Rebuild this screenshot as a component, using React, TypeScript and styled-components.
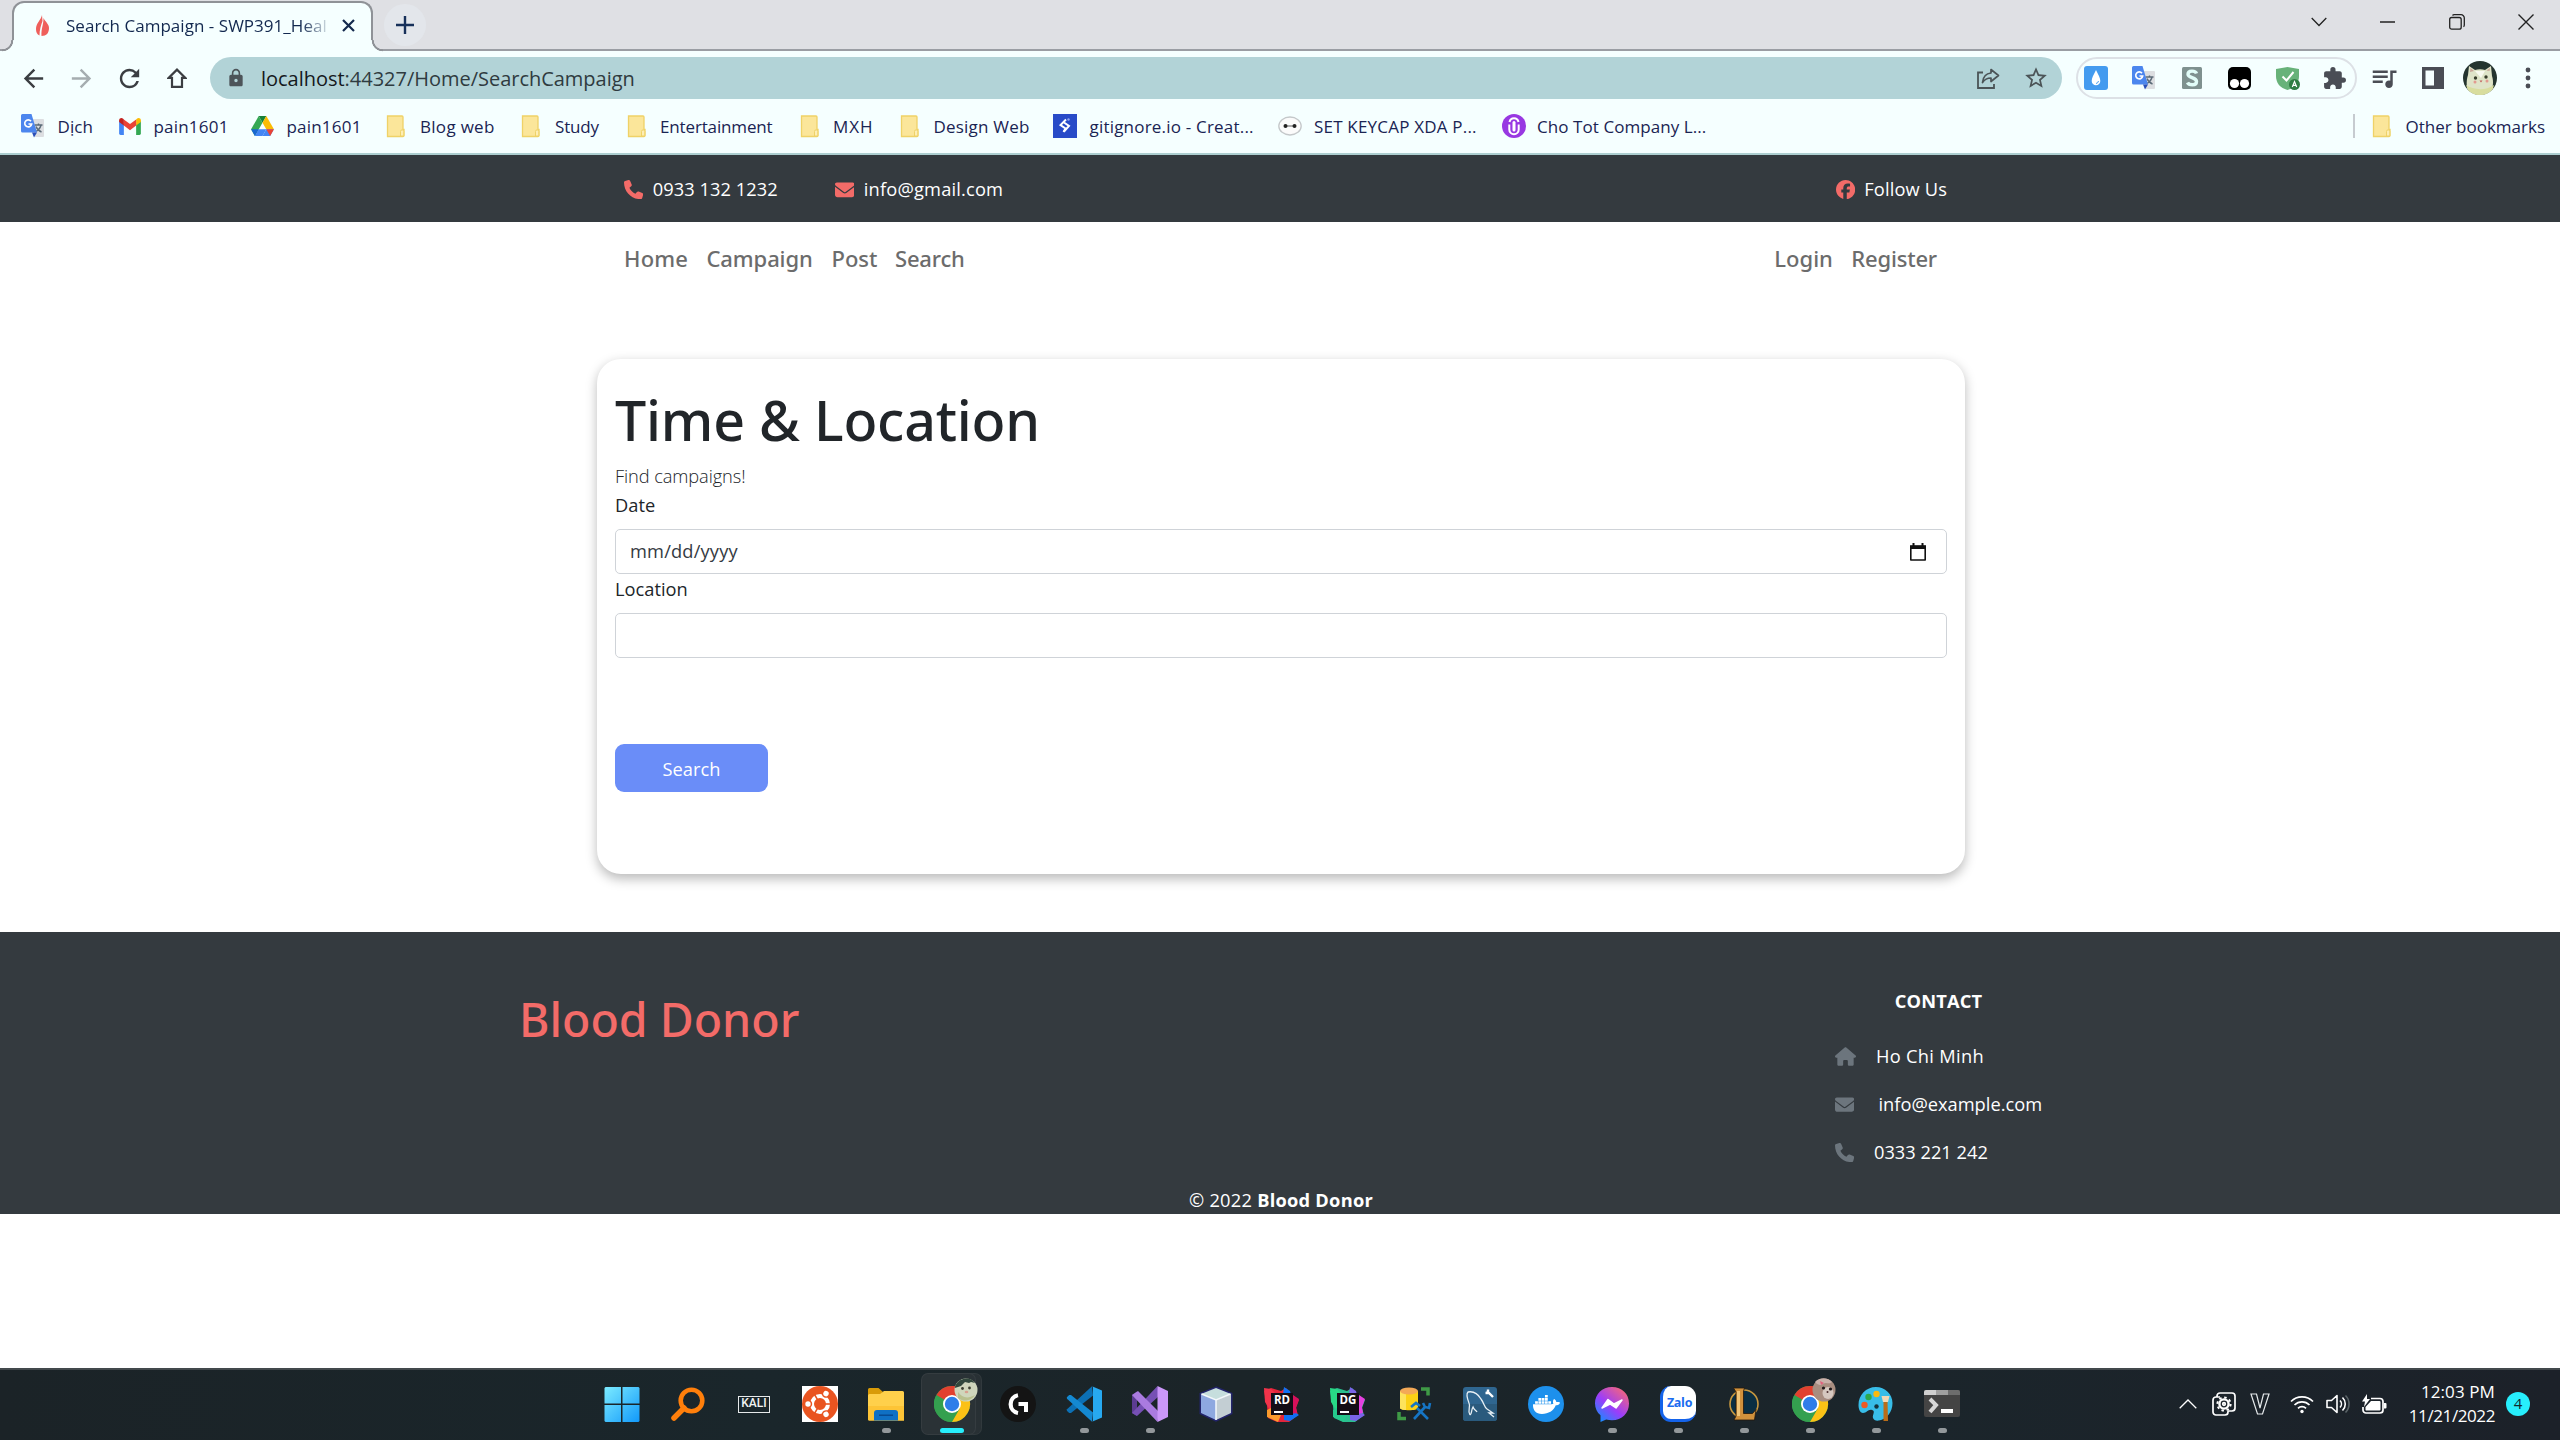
import React from "react";
import styled, { createGlobalStyle, css } from "styled-components";
import { FaPhone, FaEnvelope, FaFacebook, FaHouse, FaDocker } from "react-icons/fa6";
import { MdArrowBack, MdArrowForward, MdRefresh, MdLock, MdStarBorder, MdExtension, MdQueueMusic } from "react-icons/md";

const sans = `"Open Sans", "Noto Sans", sans-serif`;
const wide = `"Noto Sans", "Open Sans", sans-serif`;

const Global = createGlobalStyle`
  * { box-sizing: border-box; }
  body { margin: 0; background: #fff; font-family: ${sans}; overflow: hidden; }
  svg { display: block; flex: none; }
`;

const Screen = styled.div`
  width: 2560px;
  height: 1440px;
  display: flex;
  flex-direction: column;
  overflow: hidden;
`;

const Text = styled.span<{ $ls?: number }>`
  white-space: nowrap;
  letter-spacing: ${(p) => p.$ls ?? 0}px;
`;

/* ---------- browser chrome ---------- */

const TabStrip = styled.div`
  height: 51px;
  background: #dfe0e4;
  border-bottom: 2px solid #9a9da3;
  display: flex;
  align-items: flex-start;
  padding-left: 12px;
`;

const flare = css`
  content: "";
  position: absolute;
  bottom: 0;
  width: 12px;
  height: 12px;
`;

const Tab = styled.div`
  position: relative;
  height: 51px;
  width: 361px;
  margin-top: 1px;
  margin-bottom: -2px;
  background: #f5ffff;
  border: 2px solid #8f9297;
  border-bottom: 0;
  border-radius: 12px 12px 0 0;
  display: flex;
  align-items: center;
  padding: 0 16px 4px 20px;
  font-size: 17px;
  color: #12284f;
  &::before {
    ${flare}
    left: -12px;
    background: radial-gradient(circle at 0 0, transparent 9px, #8f9297 9.6px, #8f9297 11px, #f5ffff 11.6px);
  }
  &::after {
    ${flare}
    right: -12px;
    background: radial-gradient(circle at 100% 0, transparent 9px, #8f9297 9.6px, #8f9297 11px, #f5ffff 11.6px);
  }
`;

const TabTitle = styled.div`
  width: 264px;
  margin: 0 12px 0 15px;
  overflow: hidden;
  white-space: nowrap;
  letter-spacing: 0.03px;
  mask-image: linear-gradient(90deg, #000 235px, transparent 266px);
`;

const NewTab = styled.div`
  width: 42px;
  height: 42px;
  margin: 4px 0 0 11px;
  border-radius: 50%;
  background: #e3e6eb;
  display: flex;
  align-items: center;
  justify-content: center;
`;

const WindowButtons = styled.div`
  margin-left: auto;
  display: flex;
  height: 43px;
`;

const WindowButton = styled.div`
  width: 69px;
  display: flex;
  align-items: center;
  justify-content: center;
`;

const Toolbar = styled.div`
  height: 54px;
  background: #f5ffff;
  display: flex;
  align-items: center;
  padding-left: 9px;
  color: #3b3e42;
`;

const ToolButton = styled.div<{ $w?: number; $color?: string }>`
  width: ${(p) => p.$w ?? 48}px;
  height: 42px;
  flex: none;
  display: flex;
  align-items: center;
  justify-content: center;
  color: ${(p) => p.$color ?? "inherit"};
`;

const AddressBar = styled.div`
  width: 1852px;
  height: 42px;
  margin-left: 9px;
  border-radius: 21px;
  background: #b2d3d7;
  display: flex;
  align-items: center;
  padding: 0 2px 0 16px;
  font-size: 20px;
  color: #2f3b40;
`;

const Url = styled.div`
  flex: 1;
  margin-left: 15px;
  white-space: nowrap;
  letter-spacing: -0.02px;
  b { font-weight: 400; color: #15191c; }
`;

const Extensions = styled.div`
  width: 281px;
  height: 42px;
  margin-left: 14px;
  border: 2px solid #dde1e6;
  border-radius: 21px;
  display: flex;
  align-items: center;
  justify-content: center;
  padding-right: 4px;
`;

const Avatar = styled.div`
  width: 34px;
  height: 34px;
  border-radius: 50%;
  overflow: hidden;
`;

const BookmarkBar = styled.div`
  height: 50px;
  background: #f5ffff;
  border-bottom: 2px solid #acced0;
  display: flex;
  align-items: center;
  padding: 0 15px 6px 21px;
  font-size: 17px;
  color: #1a2453;
`;

const Bookmark = styled.div<{ $w: number }>`
  width: ${(p) => p.$w}px;
  flex: none;
  display: flex;
  align-items: center;
`;

const BookmarkIcon = styled.div<{ $w: number }>`
  width: ${(p) => p.$w}px;
  flex: none;
`;

const OtherBookmarks = styled.div`
  margin-left: auto;
  height: 24px;
  border-left: 2px solid #c6cbd0;
  padding-left: 17px;
  display: flex;
  align-items: center;
`;

/* ---------- web page ---------- */

const Page = styled.main`
  flex: 1;
  background: #fff;
  color: #212529;
  font-size: 18.25px;
  line-height: 28.8px;
`;

const TopBar = styled.div`
  height: 67px;
  background: #343a3f;
  color: #fff;
  display: flex;
  align-items: center;
  padding: 2px 613px 0 624px;
`;

const ContactLink = styled.div<{ $gap: number; $after?: number }>`
  display: flex;
  align-items: center;
  gap: ${(p) => p.$gap}px;
  margin-right: ${(p) => p.$after ?? 0}px;
  svg { color: #f36b68; }
`;

const Spacer = styled.div`
  flex: 1;
`;

const Nav = styled.nav`
  height: 73px;
  padding: 0 623px 2px 624px;
  display: flex;
  align-items: center;
  font: 500 22px ${wide};
  color: #6c6c6c;
`;

const NavLink = styled.span<{ $w?: number; $ls?: number }>`
  width: ${(p) => (p.$w ? p.$w + "px" : "auto")};
  letter-spacing: ${(p) => p.$ls ?? 0}px;
`;

const Card = styled.section`
  width: 1368px;
  height: 515px;
  margin: 64px 0 58px 597px;
  padding: 26px 18px 0;
  border-radius: 24px;
  background: #fff;
  box-shadow: 0 4.8px 12px rgba(0, 0, 0, 0.27);
`;

const Title = styled.h1`
  margin: 0 0 8px;
  font: 500 55.5px/69px ${wide};
  letter-spacing: -0.2px;
`;

const Lead = styled.p`
  margin: 0;
  font-weight: 300;
  letter-spacing: -0.1px;
`;

const Label = styled.label`
  display: block;
  margin-bottom: 9.6px;
`;

const Field = styled.div`
  height: 45px;
  width: 1332px;
  margin-bottom: 0.4px;
  border: 1px solid #cfd3d8;
  border-radius: 5px;
  padding: 0 19px 0 14px;
  display: flex;
  align-items: center;
  justify-content: space-between;
  color: #343a42;
`;

const SearchButton = styled.button`
  width: 153px;
  height: 48px;
  margin-top: 86.5px;
  border: 0;
  border-radius: 9px;
  background: #6a8df8;
  color: #fff;
  font: 400 18.25px ${sans};
  display: block;
`;

const Footer = styled.footer`
  height: 282px;
  background: #343a3f;
  color: #fff;
  padding-top: 55px;
`;

const FooterColumns = styled.div`
  display: flex;
  justify-content: space-between;
  padding: 0 480px 0 519px;
`;

const Brand = styled.h2`
  margin: 4px 0 0;
  font: 500 46.5px/57.6px ${wide};
  letter-spacing: 0;
  color: #f36b68;
`;

const Contact = styled.div`
  width: 245px;
`;

const ContactTitle = styled.h6`
  margin: 0 0 26px;
  width: 207px;
  text-align: center;
  font: 700 18.25px/28.8px ${sans};
  letter-spacing: 0.2px;
`;

const ContactLine = styled.p<{ $cell: number }>`
  margin: 0 0 19.2px;
  display: flex;
  align-items: center;
  svg { color: #6c757d; }
  > div { width: ${(p) => p.$cell}px; }
`;

const IconCell = styled.div`
  flex: none;
`;

const Copyright = styled.div`
  text-align: center;
  letter-spacing: 0.25px;
  padding-left: 2px;
`;

/* ---------- taskbar ---------- */

const Taskbar = styled.div`
  height: 72px;
  border-top: 2px solid #43494c;
  background: linear-gradient(90deg, #1b2327, #1a262b 30%, #1b2428 48%, #1b252b 75%, #1c2129);
  display: flex;
  padding-left: 589px;
  color: #fff;
`;

const TaskItem = styled.div<{ $active?: boolean }>`
  width: 66px;
  height: 70px;
  flex: none;
  padding: 4px 3px 6px;
  > div {
    height: 60px;
    border-radius: 6px;
    padding-top: 12px;
    display: flex;
    flex-direction: column;
    align-items: center;
    ${(p) =>
      p.$active &&
      css`
        width: 53px;
        padding-left: 7px;
        background: #2a3236;
        box-shadow: 0 0 0 1px #353c40, 6px 0 0 0 #283034, 6px 0 0 1px #31393d;
      `}
  }
`;

const Indicator = styled.div<{ $on?: boolean }>`
  width: ${(p) => (p.$on ? 24 : 9)}px;
  height: 5px;
  margin-top: 6px;
  border-radius: 3px;
  background: ${(p) => (p.$on ? "#27eefc" : "#93989b")};
`;

const Tray = styled.div`
  margin-left: auto;
  display: flex;
  align-items: center;
  padding-right: 30px;
`;

const TrayIcon = styled.div<{ $w: number }>`
  width: ${(p) => p.$w}px;
  height: 70px;
  padding-bottom: 2px;
  display: flex;
  align-items: center;
  justify-content: center;
`;

const Clock = styled.div`
  width: 97px;
  margin: 0 11px 3px 0;
  text-align: right;
  font-size: 17px;
  line-height: 24px;
`;

const Badge = styled.div`
  width: 24px;
  height: 24px;
  margin-bottom: 3px;
  border-radius: 50%;
  background: #27eefc;
  color: #10282c;
  font-size: 15px;
  line-height: 23px;
  text-align: center;
`;

/* ---------- drawings ---------- */

const Folder = () => (
  <svg width="20" height="24" viewBox="0 0 20 24">
    <path d="M1.5 2h14.5a1 1 0 0 1 1 1v12.500h1v6a1 1 0 0 1-1 1H1.500z" fill="#fbe69a" stroke="#efd267" strokeWidth="1.300" />
    <path d="M14.500 22v-4.500a1.600 1.600 0 0 1 3.300 0V22z" fill="#fdeeb4" stroke="#efd267" />
  </svg>
);

const Translate = ({ s = 24 }: { s?: number }) => (
  <svg width={s} height={s} viewBox="0 0 24 24">
    <path d="M10 5h12a1 1 0 0 1 1 1v16a1 1 0 0 1-1 1H14z" fill="#dcdee1" />
    <path d="M13.500 11h8M17.500 9.500v1.500M20 11c-.6 3-2.500 5-5 6.500M15 12.500c1 2.500 3 4.500 5.500 5.500" stroke="#5b6b78" strokeWidth="1.400" fill="none" />
    <path d="M1.500 0h9l5.500 18.500H1.500A1.500 1.500 0 0 1 0 17V1.500A1.500 1.500 0 0 1 1.500 0z" fill="#4c86ee" />
    <path d="M11 18.500h5L13 23.500z" fill="#2a4fb8" />
    <path d="M10 7.200A3.500 3.500 0 1 0 10.700 10H7.500" stroke="#fff" strokeWidth="1.600" fill="none" />
  </svg>
);

const Gmail = () => (
  <svg width="22" height="17" viewBox="0 0 23 18">
    <path d="M0 3v13.500A1.500 1.500 0 0 0 1.500 18H5V7z" fill="#4285f4" />
    <path d="M23 3v13.500a1.500 1.500 0 0 1-1.500 1.500H18V7z" fill="#34a853" />
    <path d="M18 1.500V8l5-3.700V2.500C23 .4 20.500-.6 18.800.7z" fill="#fbbc04" />
    <path d="M5 8V1.500l6.500 4.900L18 1.500V8l-6.500 5z" fill="#ea4335" />
    <path d="M0 2.500v1.800L5 8V1.500L4.200.7C2.500-.6 0 .4 0 2.500z" fill="#c5221f" />
  </svg>
);

const Drive = () => (
  <svg width="23" height="20" viewBox="0 0 24 21">
    <path d="M8 0h8l-4 7z" fill="#188038" />
    <path d="M8 0l4 7-8 14-4-7z" fill="#34a853" />
    <path d="M16 0l8 14h-8l-4-7z" fill="#fbbc04" />
    <path d="M8 14h8l-4 7H4z" fill="#4285f4" />
    <path d="M16 14h8l-4 7h-8z" fill="#4285f4" />
    <path d="M16 14h8l-4 7z" fill="#ea4335" />
    <path d="M8 14H0l4 7z" fill="#1967d2" />
  </svg>
);

const GitIgnore = () => (
  <svg width="24" height="24" viewBox="0 0 24 24">
    <path d="M0 0h24v24H0z" fill="#284bc8" />
    <path d="M13 5.500L7.500 11l5 3.500-2 3.500" fill="none" stroke="#fff" strokeWidth="2" />
    <path d="M11 8.500l5 3.500-5 5.500" fill="none" stroke="#fff" strokeWidth="2" />
    <circle cx="15.500" cy="5.500" r="1.200" fill="#8fa5f0" />
  </svg>
);

const Keycap = () => (
  <svg width="24" height="20" viewBox="0 0 24 20">
    <ellipse cx="12" cy="10" rx="11.200" ry="9" fill="#fbfbfb" stroke="#c4c8ca" strokeWidth="1.300" />
    <path d="M8 10h8" stroke="#777" strokeWidth="1.200" />
    <circle cx="7.500" cy="10" r="2" fill="#222" />
    <circle cx="16.500" cy="10" r="2" fill="#222" />
  </svg>
);

const ChoTot = () => (
  <svg width="24" height="24" viewBox="0 0 24 24">
    <circle cx="12" cy="12" r="12" fill="#9838e2" />
    <path d="M7.300 10.500v5a4.700 4.700 0 0 0 9.400 0v-5M7.500 8c1-5 8-5 9 0" fill="none" stroke="#fff" strokeWidth="2" />
    <path d="M12 8.500v7.500" stroke="#fff" strokeWidth="3" strokeLinecap="round" />
  </svg>
);

const ChromeSvg = styled.svg`
  margin: -8px -8px 0 0;
`;

const Chrome = ({ face }: { face: "cat" | "rat" }) => (
  <ChromeSvg width="44" height="44" viewBox="0 0 44 44">
    <g transform="translate(0 8)">
      <circle cx="18" cy="18" r="18" fill="#34a04f" />
      <path d="M18 18L2.400 9A18 18 0 0 1 33.600 9z" fill="#e2402f" />
      <path d="M18 18l15.600-9A18 18 0 0 1 18 36z" fill="#fbc116" />
      <path d="M18 0a18 18 0 0 1 15.600 9H18z" fill="#e2402f" />
      <path d="M25.800 22.500L18 36A18 18 0 0 1 2.400 9l7.800 13.500z" fill="#34a04f" />
      <circle cx="18" cy="18" r="9" fill="#fff" />
      <circle cx="18" cy="18" r="7.200" fill="#2f7de9" />
    </g>
    <circle cx="32" cy="12" r="11.500" fill={face === "cat" ? "#cfd6bc" : "#a88d80"} />
    {face === "cat" ? (
      <g>
        <path d="M20.700 10A11.500 11.500 0 0 1 41 5l-4-1-2 1-4-1-4 4-3 1z" fill="#31473c" />
        <path d="M24 14c4 6 10 7 17 3a11.500 11.500 0 0 1-17 3z" fill="#b9c08e" />
        <circle cx="28.500" cy="10.500" r="1.400" fill="#3c4030" />
        <circle cx="35.500" cy="10" r="1.400" fill="#3c4030" />
        <ellipse cx="32.500" cy="14" rx="1.800" ry="1.200" fill="#d8a090" />
      </g>
    ) : (
      <g>
        <path d="M23 4a11.500 11.500 0 0 1 17 0c-2 2-4 1-6 1-4 0-5 5-11-1z" fill="#c9b1aa" />
        <path d="M28 3l4 2-3 2z" fill="#e0607c" />
        <ellipse cx="36" cy="15" rx="5.500" ry="6" fill="#d6c8c0" />
        <circle cx="31.500" cy="10" r="1.600" fill="#20181a" />
        <circle cx="38.500" cy="11" r="1.600" fill="#20181a" />
        <circle cx="35.500" cy="14" r="1" fill="#4b2d2d" />
      </g>
    )}
  </ChromeSvg>
);

const Cat = () => (
  <svg width="34" height="34" viewBox="0 0 34 34">
    <path d="M0 0h34v34H0z" fill="#24342f" />
    <path d="M5 14l1-9 6 4c3-1 7-1 10 0l6-4 1 10c2 6 1 12-2 19H7C3 28 3 20 5 14z" fill="#dfe4c8" />
    <path d="M7 11l0.500-4 3.500 3zM26.500 10l0.500-3-3.500 2.500z" fill="#c9a596" />
    <path d="M12 10h10l-4 7z" fill="#f8f9ee" />
    <circle cx="12.500" cy="17" r="1.700" fill="#3a3f2c" />
    <circle cx="23" cy="16" r="1.700" fill="#3a3f2c" />
    <circle cx="12" cy="21" r="1.500" fill="#e29a90" />
    <circle cx="24" cy="20" r="1.500" fill="#e29a90" />
    <path d="M16.500 19.500h3L18 21.500z" fill="#c0605c" />
    <path d="M3 24c7 5 20 6 28 0l-3 10H7z" fill="#d8dd9e" />
  </svg>
);

const Start = () => (
  <svg width="36" height="36" viewBox="0 0 36 36">
    <defs>
      <linearGradient id="st" x1="0" y1="0" x2="1" y2="1" gradientUnits="objectBoundingBox">
        <stop offset="0" stopColor="#7cebff" />
        <stop offset="1" stopColor="#1199fb" />
      </linearGradient>
    </defs>
    <path d="M1.500 1H17v16.500H.5V2zM18.500 1H34.500l1 1v15.500h-17zM.5 19H17v17H1.500l-1-1zM18.500 19h17v16l-1 1h-16z" fill="url(#st)" />
  </svg>
);

const Everything = () => (
  <svg width="36" height="36" viewBox="0 0 36 36">
    <circle cx="21.500" cy="14.500" r="10.800" fill="none" stroke="#ff7f0b" strokeWidth="4.600" />
    <path d="M14 22L4 32" stroke="#ff7f0b" strokeWidth="5.500" strokeLinecap="round" />
  </svg>
);

const KaliBox = styled.div`
  width: 32px;
  height: 17px;
  margin: 9.5px 0;
  border: 1.5px solid #e6e9ea;
  font: 500 12px/13px "Roboto", ${sans};
  letter-spacing: 0;
  text-align: center;
  color: #f2f4f4;
`;

const Ubuntu = () => (
  <svg width="36" height="36" viewBox="0 0 36 36">
    <path d="M0 0h36v36H0z" fill="#fff" />
    <circle cx="18" cy="18" r="18" fill="#e95420" />
    <circle cx="18" cy="18" r="8" fill="none" stroke="#fff" strokeWidth="4" />
    {[60, 180, 300].map((a) => (
      <g key={a} transform={`rotate(${a} 18 18)`}>
        <path d="M18 18h14" stroke="#e95420" strokeWidth="0" />
        <circle cx="30" cy="18" r="4.200" fill="#e95420" />
        <circle cx="30" cy="18" r="2.700" fill="#fff" />
        <path d="M7.500 18h5.500" stroke="#e95420" strokeWidth="1.600" />
      </g>
    ))}
  </svg>
);

const Explorer = () => (
  <svg width="36" height="36" viewBox="0 0 36 36">
    <path d="M0 8V3.500A1.500 1.500 0 0 1 1.500 2h9l4.500 4-4 5H0z" fill="#d99b08" />
    <path d="M0 9.500A1.500 1.500 0 0 1 1.500 8H12l4-3h18.500A1.500 1.500 0 0 1 36 6.500v28H1.500A1.500 1.500 0 0 1 0 33z" fill="#ffd04b" />
    <path d="M0 20h36v14.500H1.500A1.500 1.500 0 0 1 0 33z" fill="#fdc436" />
    <path d="M6 34.500V27a3 3 0 0 1 3-3h18a3 3 0 0 1 3 3v7.500z" fill="#0f70c4" />
    <path d="M11 29.200h14" stroke="#07448a" strokeWidth="1.300" />
  </svg>
);

const Ghub = () => (
  <svg width="36" height="36" viewBox="0 0 36 36">
    <circle cx="18" cy="18" r="18" fill="#141414" />
    <path d="M18 9.300A9 9 0 0 0 18 27" fill="none" stroke="#fff" strokeWidth="4.200" />
    <path d="M18.500 18H26v8" fill="none" stroke="#fff" strokeWidth="4" />
  </svg>
);

const VSCode = () => (
  <svg width="36" height="36" viewBox="0 0 36 36">
    <path d="M26 .3L1 23.200l-.2 1.500 2.400 2.200 1.800.1L27 9.500z" fill="#0c70b5" />
    <path d="M5 9l-1.800 0L.8 11.200 1 12.800 26 35.700 27 26.500z" fill="#1489d2" />
    <path d="M26 .3L36 4.500v27L26 35.700c.6-.4 1-1 1-2V2.300c0-1-.4-1.600-1-2z" fill="#27a9f1" />
  </svg>
);

const VisualStudio = () => (
  <svg width="36" height="36" viewBox="0 0 36 36">
    <path d="M0 9l5-3.500V30l-5-3z" fill="#5c3c92" />
    <path d="M5 30L0 27 25.500 0 27 10z" fill="#7650b4" />
    <path d="M0 9l6-4 21 21-1.500 10z" fill="#aa7be0" />
    <path d="M25.500 0L36 5v26l-10.500 5z" fill="#cb97f9" />
  </svg>
);

const Cube = () => (
  <svg width="36" height="36" viewBox="0 0 36 36">
    <path d="M18 2l15 6v19L18 34 3 27V8z" fill="none" stroke="#23246b" strokeWidth="3" />
    <path d="M18 2l15 6-15 6L3 8z" fill="#c6dedd" />
    <path d="M3 8l15 6v20L3 27z" fill="#8ea8e0" />
    <path d="M33 8l-15 6v20l15-7z" fill="#c3ced3" />
    <path d="M18 14v20M3.500 8L18 14l14.500-6" stroke="#f4f8fb" strokeWidth="1.500" fill="none" />
  </svg>
);

const JetBox = styled.div`
  position: relative;
  width: 36px;
  height: 36px;
  > span {
    position: absolute;
    left: 7px;
    top: 7px;
    width: 22px;
    height: 22px;
    background: #140d16;
    font: 700 11.5px/14px ${sans};
    text-align: center;
    color: #fff;
  }
  > i {
    position: absolute;
    left: 10px;
    top: 25px;
    width: 9px;
    height: 2px;
    background: #fff;
  }
`;

const JetBrains = ({ name, c }: { name: string; c: string[] }) => (
  <JetBox>
    <svg width="36" height="36" viewBox="0 0 36 36">
      <path d="M0 5l7 -3 10 3 5-3 5 6 8 6-3 8 2 7-9 7-12 0-9-4-1-12z" fill={c[0]} />
      <path d="M0 2l7 1 8 8-9 13-5-8z" fill={c[1]} />
      <path d="M20 1l6 4 2 8-9-5zM20 28l9-3 6 4-9 6-6-1z" fill={c[2]} />
      <path d="M26 7l9 6-3 8 1 6-6 1z" fill={c[3]} />
      <path d="M3 24l6-3 8 8-3 7-11-5z" fill={c[4]} />
    </svg>
    <span>{name}</span>
    <i />
  </JetBox>
);

const SqlTools = () => (
  <svg width="36" height="36" viewBox="0 0 36 36">
    <path d="M4 5v17c0 3 18 3 18 0V5z" fill="#fcd116" />
    <path d="M4 5v17c0 1 3 2 6 2V7z" fill="#fde35c" />
    <ellipse cx="13" cy="5" rx="9" ry="3.500" fill="#f3a957" />
    <path d="M25 3h7v6.500M3 26v6.500h7" fill="none" stroke="#3f9a46" strokeWidth="3.500" />
    <path d="M18 33l11-12M21 22l11 11M15 21l5-4 4 3M27 17l2 4 4 1 1-5" fill="none" stroke="#1675c4" strokeWidth="2.600" />
  </svg>
);

const MySql = () => (
  <svg width="36" height="36" viewBox="0 0 36 36">
    <rect x="1" y="1" width="34" height="34" rx="3" fill="#2f6690" />
    <path d="M1 18h34v14a3 3 0 0 1-3 3H4a3 3 0 0 1-3-3z" fill="#2a5a7d" />
    <path d="M8 29c-3-5 1-8-1-12C5 12 4 8 6 6c5-1 10 2 13 7 3 4 3 8 6 10l6 4-4 0 5 4M8 29c2-1 1-5 3-8 1 3 3 3 4 5" fill="none" stroke="#e9f1f6" strokeWidth="1.300" />
    <path d="M25 5l6 6M26 3.500v3.500l-2.500 0" stroke="#fff" strokeWidth="2.400" fill="none" />
  </svg>
);

const DockerDisc = styled.div`
  width: 36px;
  height: 36px;
  border-radius: 50%;
  background: #1d90ec;
  color: #fff;
  display: flex;
  align-items: center;
  justify-content: center;
`;

const Messenger = () => (
  <svg width="36" height="36" viewBox="0 0 36 36">
    <defs>
      <linearGradient id="ms" x1="0.1" y1="1" x2="0.9" y2="0">
        <stop offset="0" stopColor="#0a93ff" />
        <stop offset=".45" stopColor="#9b3dfa" />
        <stop offset="1" stopColor="#ff6a6e" />
      </linearGradient>
    </defs>
    <path d="M18 1C8 1 1 8.200 1 17.300c0 5 2 9.200 5.500 12V36l5.700-2.500c1.800.5 3.800.8 5.800.8 10 0 17-7.200 17-16.800S28 1 18 1z" fill="url(#ms)" />
    <path d="M8 22l6-8.500 6 4.500 8-4-6 8-6-4z" fill="#fff" stroke="#fff" strokeWidth="1.500" strokeLinejoin="round" />
  </svg>
);

const ZaloTile = styled.div`
  width: 36px;
  height: 36px;
  border-radius: 11px;
  background: #fff;
  border-left: 3px solid #1463ea;
  border-bottom: 3px solid #1463ea;
  font: 700 12.5px/33px ${sans};
  letter-spacing: -0.3px;
  text-align: center;
  color: #1a6cf0;
`;

const League = () => (
  <svg width="36" height="36" viewBox="0 0 36 36">
    <circle cx="18" cy="18" r="14" fill="#0a2e42" stroke="#c6973f" strokeWidth="1.600" />
    <path d="M7.500 2h11l-1 3v22.500h9l3.500-4L28.500 34H8l2-4V6z" fill="#d0913c" stroke="#23170a" strokeWidth=".8" />
    <path d="M11 5h3v25h-3z" fill="#f0c477" />
  </svg>
);

const Paint = () => (
  <svg width="36" height="36" viewBox="0 0 36 36">
    <path d="M18 1C8 1 .5 9 .5 19c0 4 1.500 8 4.500 8 4 0 5-4 9-3 4 1 0 5 1 8 .6 2 3 3 6 2.500C29 33 34.500 26 34.500 17S27 1 18 1z" fill="#38bde8" />
    <circle cx="6.500" cy="19" r="3.200" fill="#ee5a24" />
    <circle cx="10.500" cy="11" r="3.200" fill="#2ca84a" />
    <circle cx="18.500" cy="8" r="3.200" fill="#fbb90f" />
    <circle cx="18.500" cy="20.500" r="2.200" fill="#14343d" />
    <path d="M25.500 15h4l.5 20h-4.500z" fill="#b96d18" />
    <path d="M23.500 10h8l-1.500 6h-5z" fill="#f3d9b5" />
  </svg>
);

const Terminal = () => (
  <svg width="36" height="36" viewBox="0 0 36 36">
    <path d="M0 6a2 2 0 0 1 2-2h32a2 2 0 0 1 2 2v23a2 2 0 0 1-2 2H2a2 2 0 0 1-2-2z" fill="#444" />
    <path d="M0 9V6a2 2 0 0 1 2-2h10v5z" fill="#cfcfcf" />
    <path d="M12 4h12v5H12z" fill="#a0a0a0" />
    <path d="M24 4h10a2 2 0 0 1 2 2v3H24z" fill="#6d6d6d" />
    <path d="M6 13l6 6-6 7" fill="none" stroke="#d6d6d6" strokeWidth="4" />
    <rect x="17" y="23" width="12" height="4" fill="#fff" />
  </svg>
);

const bookmarks: { w: number; off: number; label: string; ls: number; icon: React.ReactNode }[] = [
  { w: 97.5, off: 36.5, label: "Dịch", ls: 0.08, icon: <Translate /> },
  { w: 132.5, off: 35, label: "pain1601", ls: 0.2, icon: <Gmail /> },
  { w: 135, off: 35.5, label: "pain1601", ls: 0.2, icon: <Drive /> },
  { w: 135, off: 34, label: "Blog web", ls: 0.3, icon: <Folder /> },
  { w: 105.5, off: 34, label: "Study", ls: -0.18, icon: <Folder /> },
  { w: 173, off: 33.5, label: "Entertainment", ls: -0.15, icon: <Folder /> },
  { w: 100.5, off: 33.5, label: "MXH", ls: 1, icon: <Folder /> },
  { w: 153, off: 33.5, label: "Design Web", ls: 0.2, icon: <Folder /> },
  { w: 225, off: 36.5, label: "gitignore.io - Creat...", ls: 0.2, icon: <GitIgnore /> },
  { w: 224, off: 36, label: "SET KEYCAP XDA P...", ls: 0.2, icon: <Keycap /> },
  { w: 210, off: 35, label: "Cho Tot Company L...", ls: 0.07, icon: <ChoTot /> },
];

const apps: { icon: React.ReactNode; running?: boolean; active?: boolean }[] = [
  { icon: <Start /> },
  { icon: <Everything /> },
  { icon: <KaliBox>KALI</KaliBox> },
  { icon: <Ubuntu /> },
  { icon: <Explorer />, running: true },
  { icon: <Chrome face="cat" />, active: true },
  { icon: <Ghub /> },
  { icon: <VSCode />, running: true },
  { icon: <VisualStudio />, running: true },
  { icon: <Cube /> },
  { icon: <JetBrains name="RD" c={["#e5243b", "#f2334a", "#1070f4", "#d8105c", "#fb9a2c"]} /> },
  { icon: <JetBrains name="DG" c={["#2bbf8f", "#28d886", "#7a63e8", "#e640e0", "#25c98c"]} /> },
  { icon: <SqlTools /> },
  { icon: <MySql /> },
  { icon: <DockerDisc><FaDocker size={27} /></DockerDisc> },
  { icon: <Messenger />, running: true },
  { icon: <ZaloTile>Zalo</ZaloTile>, running: true },
  { icon: <League />, running: true },
  { icon: <Chrome face="rat" />, running: true },
  { icon: <Paint />, running: true },
  { icon: <Terminal />, running: true },
];

export default function App() {
  return (
    <Screen>
      <Global />
      <TabStrip>
        <Tab>
          <svg width="17" height="21" viewBox="0 0 17 21">
            <path d="M8 0C7 5 2 8 2 14c0 3 1 5.500 3.500 6.500C5.500 15 7 10 8.500 6z" fill="#ef5f5b" />
            <path d="M9.500 3C9.500 10 7 14 7.500 21c5 0 7.500-3 7.500-8 0-4-3.500-6-5.500-10z" fill="#ef5f5b" />
          </svg>
          <TabTitle>Search Campaign - SWP391_Heal</TabTitle>
          <svg width="13" height="13" viewBox="0 0 13 13">
            <path d="M1 1l11 11M12 1L1 12" stroke="#14294d" strokeWidth="2.200" />
          </svg>
        </Tab>
        <NewTab>
          <svg width="18" height="18" viewBox="0 0 18 18">
            <path d="M9 0v18M0 9h18" stroke="#17305a" strokeWidth="2.400" />
          </svg>
        </NewTab>
        <WindowButtons>
          <WindowButton>
            <svg width="16" height="10" viewBox="0 0 16 10"><path d="M.7 1L8 8.500 15.300 1" stroke="#222" strokeWidth="1.300" fill="none" /></svg>
          </WindowButton>
          <WindowButton>
            <svg width="15" height="2" viewBox="0 0 15 2"><path d="M0 1h15" stroke="#222" strokeWidth="1.500" /></svg>
          </WindowButton>
          <WindowButton>
            <svg width="16" height="16" viewBox="0 0 16 16">
              <rect x=".7" y="3.500" width="11.500" height="11.700" rx="2" fill="none" stroke="#222" strokeWidth="1.300" />
              <path d="M3.500 1.500C4 .9 4.500.7 5.200.7H12a3.300 3.300 0 0 1 3.300 3.300v7c0 .7-.3 1.300-.8 1.700" fill="none" stroke="#222" strokeWidth="1.300" />
            </svg>
          </WindowButton>
          <WindowButton>
            <svg width="16" height="16" viewBox="0 0 16 16"><path d="M.5.5l15 15M15.500.5l-15 15" stroke="#222" strokeWidth="1.400" /></svg>
          </WindowButton>
        </WindowButtons>
      </TabStrip>

      <Toolbar>
        <ToolButton><MdArrowBack size={29} /></ToolButton>
        <ToolButton $color="#a5adb0"><MdArrowForward size={29} /></ToolButton>
        <ToolButton><MdRefresh size={29} /></ToolButton>
        <ToolButton>
          <svg width="20" height="20" viewBox="0 0 20 20">
            <path d="M10 1.600L1.800 9.800H5V18.800h10V9.800h3.200z" fill="none" stroke="currentColor" strokeWidth="2.200" />
          </svg>
        </ToolButton>
        <AddressBar>
          <MdLock size={20} color="#4d5459" />
          <Url><b>localhost</b>:44327/Home/SearchCampaign</Url>
          <ToolButton $color="#4b5457">
            <svg width="23" height="21" viewBox="0 0 23 21">
              <path d="M6 4.500H1V20h16v-4" fill="none" stroke="currentColor" strokeWidth="1.800" />
              <path d="M14 1.500l7.500 6-7.500 6V10c-4 0-6.500 1.500-8.500 4.500C6 9.500 8.500 5.500 14 5z" fill="none" stroke="currentColor" strokeWidth="1.700" strokeLinejoin="round" />
            </svg>
          </ToolButton>
          <ToolButton $w={48} $color="#4b5457"><MdStarBorder size={26} /></ToolButton>
        </AddressBar>
        <Extensions>
          <ToolButton>
            <svg width="24" height="24" viewBox="0 0 24 24">
              <rect width="24" height="24" rx="3" fill="#449bef" />
              <path d="M12 4c2.500 5 4.300 8 4.300 11a4.300 4.300 0 0 1-8.600 0C7.700 12 9.500 9 12 4z" fill="#fff" />
              <path d="M12 17.500a3 3 0 0 0 2.500-2.500" stroke="#449bef" fill="none" />
            </svg>
          </ToolButton>
          <ToolButton><Translate /></ToolButton>
          <ToolButton>
            <svg width="22" height="22" viewBox="0 0 22 22">
              <rect x="1" y="0" width="20" height="22" rx="1.500" fill="#7f918f" />
              <path d="M15.500 6.500C14.500 3.500 7 3 7 7.300c0 4 8.500 2.800 8.500 7.200 0 4.500-7.500 4-9 1" fill="none" stroke="#e2fdf8" strokeWidth="3.400" />
            </svg>
          </ToolButton>
          <ToolButton>
            <svg width="23" height="23" viewBox="0 0 23 23">
              <rect width="23" height="23" rx="5" fill="#000" />
              <circle cx="6.500" cy="16.500" r="4.600" fill="#fff" />
              <circle cx="16.500" cy="16.500" r="4.600" fill="#fff" />
            </svg>
          </ToolButton>
          <ToolButton>
            <svg width="24" height="23" viewBox="0 0 24 23">
              <path d="M11.500 0L23 2v7c0 7-4 12-11.500 14C4 21 0 16 0 9V2z" fill="#67b279" />
              <path d="M6.500 9.500l4 4 7-8.500" stroke="#fff" strokeWidth="2" fill="none" />
              <circle cx="18.500" cy="17.500" r="5.500" fill="#2f7d43" />
              <path d="M16.300 20l2.200-5.500L20.700 20M17 18.300h3" stroke="#fff" strokeWidth="1.200" fill="none" />
            </svg>
          </ToolButton>
          <ToolButton $w={46}><MdExtension size={25} color="#4a4d55" /></ToolButton>
        </Extensions>
        <ToolButton $w={54} $color="#4a4d55"><MdQueueMusic size={30} /></ToolButton>
        <ToolButton $w={43} $color="#4a4d55">
          <svg width="22" height="22" viewBox="0 0 22 22">
            <path d="M0 0h22v22H0z" fill="currentColor" />
            <path d="M3.500 3.500H12v15H3.500z" fill="#f5ffff" />
          </svg>
        </ToolButton>
        <ToolButton $w={51}><Avatar><Cat /></Avatar></ToolButton>
        <ToolButton $w={46} $color="#4a4d55">
          <svg width="6" height="22" viewBox="0 0 6 22">
            <circle cx="3" cy="3" r="2.400" fill="currentColor" />
            <circle cx="3" cy="11" r="2.400" fill="currentColor" />
            <circle cx="3" cy="19" r="2.400" fill="currentColor" />
          </svg>
        </ToolButton>
      </Toolbar>

      <BookmarkBar>
        {bookmarks.map((b, i) => (
          <Bookmark key={i} $w={b.w}>
            <BookmarkIcon $w={b.off}>{b.icon}</BookmarkIcon>
            <Text $ls={b.ls}>{b.label}</Text>
          </Bookmark>
        ))}
        <OtherBookmarks>
          <BookmarkIcon $w={33}><Folder /></BookmarkIcon>
          <Text>Other bookmarks</Text>
        </OtherBookmarks>
      </BookmarkBar>

      <Page>
        <TopBar>
          <ContactLink $gap={9.5} $after={57}><FaPhone size={19.2} /><Text $ls={0.06}>0933 132 1232</Text></ContactLink>
          <ContactLink $gap={9.5}><FaEnvelope size={19.6} /><Text $ls={0.18}>info@gmail.com</Text></ContactLink>
          <Spacer />
          <ContactLink $gap={9}><FaFacebook size={19.2} /><Text $ls={0.14}>Follow Us</Text></ContactLink>
        </TopBar>
        <Nav>
          <NavLink $w={82.5} $ls={0.2}>Home</NavLink>
          <NavLink $w={125} $ls={-0.1}>Campaign</NavLink>
          <NavLink $w={63.5}>Post</NavLink>
          <NavLink $ls={-0.2}>Search</NavLink>
          <Spacer />
          <NavLink $w={77}>Login</NavLink>
          <NavLink $ls={-0.19}>Register</NavLink>
        </Nav>
        <Card>
          <Title>Time &amp; Location</Title>
          <Lead>Find campaigns!</Lead>
          <Label>Date</Label>
          <Field>
            <Text $ls={0.17}>mm/dd/yyyy</Text>
            <svg width="18" height="18" viewBox="0 0 18 18">
              <path d="M1.800 3.500h14.400V17H1.800z" fill="none" stroke="#111" strokeWidth="1.600" strokeLinejoin="round" />
              <path d="M1 2.200h16V6H1zM3.500 0h2v3h-2zM12.500 0h2v3h-2z" fill="#111" />
            </svg>
          </Field>
          <Label>Location</Label>
          <Field />
          <SearchButton>Search</SearchButton>
        </Card>
        <Footer>
          <FooterColumns>
            <Brand>Blood Donor</Brand>
            <Contact>
              <ContactTitle>CONTACT</ContactTitle>
              <ContactLine $cell={41}><IconCell><FaHouse size={21} /></IconCell><Text $ls={0.3}>Ho Chi Minh</Text></ContactLine>
              <ContactLine $cell={43.5}><IconCell><FaEnvelope size={19.2} /></IconCell><Text>info@example.com</Text></ContactLine>
              <ContactLine $cell={39}><IconCell><FaPhone size={19.2} /></IconCell><Text>0333 221 242</Text></ContactLine>
            </Contact>
          </FooterColumns>
          <Copyright>© 2022 <b>Blood Donor</b></Copyright>
        </Footer>
      </Page>

      <Taskbar>
        {apps.map((a, i) => (
          <TaskItem key={i} $active={a.active}>
            <div>
              {a.icon}
              {(a.running || a.active) && <Indicator $on={a.active} />}
            </div>
          </TaskItem>
        ))}
        <Tray>
          <TrayIcon $w={36}>
            <svg width="18" height="10" viewBox="0 0 18 10"><path d="M.7 9.300L9 1l8.300 8.300" stroke="#fff" strokeWidth="1.300" fill="none" /></svg>
          </TrayIcon>
          <TrayIcon $w={36}>
            <svg width="24" height="24" viewBox="0 0 24 24" fill="none" stroke="#fff" strokeWidth="1.700">
              <path d="M5 5V4a3 3 0 0 1 3-3h12a3 3 0 0 1 3 3v12a3 3 0 0 1-3 3h-1M16 19v1a3 3 0 0 1-3 3H4a3 3 0 0 1-3-3V8a3 3 0 0 1 3-3h4M19 19h-3" />
              <circle cx="12" cy="12" r="4.600" strokeWidth="2.400" />
              <circle cx="12" cy="12" r="1.300" />
              <circle cx="12" cy="12" r="6.600" strokeDasharray="2.500 2.680" strokeWidth="2" />
            </svg>
          </TrayIcon>
          <TrayIcon $w={36}>
            <svg width="20" height="22" viewBox="0 0 20 22" fill="none" stroke="#e6eaec" strokeWidth="1.200">
              <path d="M1 1h5.500l3.500 14L13.500 1H19l-6.500 20h-5z" />
            </svg>
          </TrayIcon>
          <TrayIcon $w={48}>
            <svg width="24" height="19" viewBox="0 0 24 19" fill="none" stroke="#fff" strokeWidth="1.700">
              <path d="M1 6.500a15.500 15.500 0 0 1 22 0M4.500 10a10.600 10.600 0 0 1 15 0M8 13.300a5.700 5.700 0 0 1 8 0" />
              <circle cx="12" cy="16.500" r="1.700" fill="#fff" stroke="none" />
            </svg>
          </TrayIcon>
          <TrayIcon $w={24}>
            <svg width="24" height="20" viewBox="0 0 24 20" fill="none" stroke="#fff" strokeWidth="1.600">
              <path d="M1 6.500h4.500L11 1.500v17l-5.500-5H1z" strokeLinejoin="round" />
              <path d="M14 6.500a5 5 0 0 1 0 7M16.500 3.500a9 9 0 0 1 0 13" />
              <path d="M19.500 1.500a12 12 0 0 1 0 17" stroke="#5b6468" />
            </svg>
          </TrayIcon>
          <TrayIcon $w={48}>
            <svg width="25" height="21" viewBox="0 0 25 21">
              <path d="M9 4.500h9a3 3 0 0 1 3 3V16a3 3 0 0 1-3 3H4a3 3 0 0 1-3-3v-3" fill="none" stroke="#fff" strokeWidth="1.700" />
              <path d="M9 7h8.500a1 1 0 0 1 1 1v7.500a1 1 0 0 1-1 1h-13c-.6 0-1-.4-1-1V13zM22 9h1.500a1 1 0 0 1 1 1v3.500a1 1 0 0 1-1 1H22z" fill="#fff" />
              <path d="M5 0L0 7.500h3L2 13l6-8H5z" fill="#fff" />
            </svg>
          </TrayIcon>
          <Clock>
            <Text $ls={0.1}>12:03 PM</Text>
            <br />
            <Text $ls={-0.4}>11/21/2022</Text>
          </Clock>
          <Badge>4</Badge>
        </Tray>
      </Taskbar>
    </Screen>
  );
}
